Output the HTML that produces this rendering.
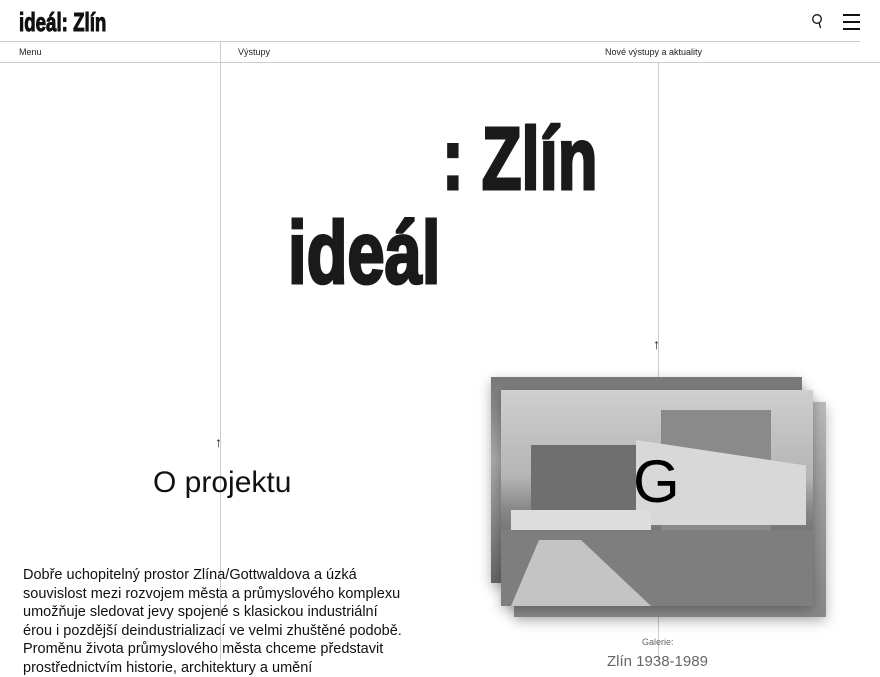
<!DOCTYPE html>
<html><head><meta charset="utf-8"><style>
*{margin:0;padding:0;box-sizing:border-box}
body{width:880px;height:660px;overflow:hidden;background:#fff;font-family:"Liberation Sans",sans-serif;color:#111;position:relative}
.abs{position:absolute}
.cond{font-family:"Liberation Sans",sans-serif;font-weight:bold;transform-origin:left top;white-space:nowrap}
.small{font-size:9px;color:#222}
.photo{position:absolute;box-shadow:0 4px 12px rgba(0,0,0,.3)}
</style></head><body>
<div class="abs cond" style="left:19px;top:7px;font-size:26px;line-height:30px;transform:scaleX(0.72);-webkit-text-stroke:1px #111">ideál: Zlín</div>
<svg class="abs" style="left:811px;top:13px" width="14" height="16" viewBox="0 0 14 16"><circle cx="6" cy="6" r="4.3" fill="none" stroke="#111" stroke-width="1.3"/><path d="M8 9.5 L9.5 15" stroke="#111" stroke-width="1.3"/></svg>
<div class="abs" style="left:843px;top:14px;width:17px;height:1.5px;background:#111"></div>
<div class="abs" style="left:843px;top:21px;width:17px;height:1.5px;background:#111"></div>
<div class="abs" style="left:843px;top:28px;width:17px;height:1.5px;background:#111"></div>
<div class="abs" style="left:0;top:41px;width:860px;height:1px;background:#ccc"></div>
<div class="abs" style="left:0;top:62px;width:880px;height:1px;background:#ccc"></div>
<div class="abs" style="left:220px;top:41px;width:1px;height:619px;background:#ccc"></div>
<div class="abs" style="left:658px;top:62px;width:1px;height:598px;background:#ccc"></div>
<div class="abs small" style="left:19px;top:47px">Menu</div>
<div class="abs small" style="left:238px;top:47px">Výstupy</div>
<div class="abs small" style="left:605px;top:47px">Nové výstupy a aktuality</div>
<div class="abs cond" style="left:442px;top:109px;font-size:88px;line-height:100px;color:#1a1a1a;transform:scaleX(0.74);-webkit-text-stroke:3px #1a1a1a">: Zlín</div>
<div class="abs cond" style="left:288px;top:203px;font-size:88px;line-height:100px;color:#1a1a1a;transform:scaleX(0.76);-webkit-text-stroke:3px #1a1a1a">ideál</div>
<div class="abs" style="left:653px;top:336px;font-size:14px">↑</div>
<div class="abs" style="left:215px;top:434px;font-size:14px">↑</div>
<div class="abs" style="left:153px;top:466px;font-size:30px;color:#111">O projektu</div>
<div class="abs" style="left:23px;top:566px;font-size:14.5px;line-height:18.5px;white-space:nowrap;color:#111">Dobře uchopitelný prostor Zlína/Gottwaldova a úzká<br>souvislost mezi rozvojem města a průmyslového komplexu<br>umožňuje sledovat jevy spojené s klasickou industriální<br>érou i pozdější deindustrializací ve velmi zhuštěné podobě.<br>Proměnu života průmyslového města chceme představit<br>prostřednictvím historie, architektury a umění</div>
<div class="photo" style="left:514px;top:402px;width:312px;height:215px;background:linear-gradient(#bbb,#999 50%,#888)"></div>
<div class="photo" style="left:491px;top:377px;width:311px;height:206px;background:linear-gradient(#777,#aaa 40%,#666)"></div>
<div class="photo" style="left:501px;top:390px;width:312px;height:216px;overflow:hidden;background:linear-gradient(#cfcfcf,#b5b5b5 40%,#888 55%,#777 65%,#8a8a8a)">
 <div class="abs" style="left:160px;top:20px;width:110px;height:120px;background:#8a8a8a"></div>
 <div class="abs" style="left:30px;top:55px;width:135px;height:80px;background:#6f6f6f"></div>
 <div class="abs" style="left:135px;top:50px;width:170px;height:85px;background:#d8d8d8;clip-path:polygon(0 0,100% 30%,100% 100%,0 100%)"></div>
 <div class="abs" style="left:10px;top:120px;width:140px;height:20px;background:#ddd"></div>
 <div class="abs" style="left:0;top:140px;width:312px;height:76px;background:#7e7e7e"></div>
 <div class="abs" style="left:10px;top:150px;width:140px;height:66px;background:#c4c4c4;clip-path:polygon(20% 0,50% 0,100% 100%,0 100%)"></div>
</div>
<div class="abs" style="left:633px;top:447px;font-size:60px;color:#000">G</div>
<div class="abs" style="left:642px;top:637px;font-size:9px;color:#666">Galerie:</div>
<div class="abs" style="left:607px;top:653px;font-size:15px;color:#666">Zlín 1938-1989</div>
</body></html>
